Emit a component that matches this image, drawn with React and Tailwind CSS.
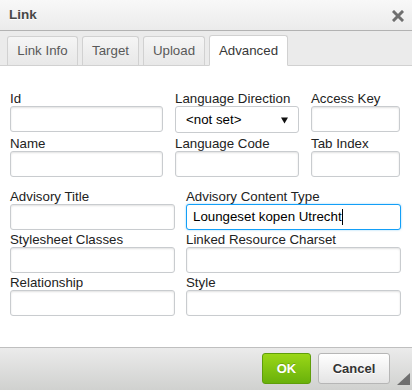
import React from "react";

const Label = ({ children }) => (
  <div className="h-[15px] leading-[15px] text-[13.3px] text-[#222] whitespace-nowrap">{children}</div>
);

const Input = ({ children, focused }) => (
  <div
    className={
      "h-[26px] rounded-[3px] bg-white border flex items-center pl-[6px] text-[13.3px] text-black " +
      (focused
        ? "border-[#139ff7] shadow-[0_0_2px_rgba(19,159,247,0.5)]"
        : "border-[#c9cccf] shadow-[inset_0_1px_2px_rgba(0,0,0,0.12)]")
    }
  >
    {children}
  </div>
);

const Field = ({ label, children, focused }) => (
  <div className="flex flex-col">
    <Label>{label}</Label>
    <Input focused={focused}>{children}</Input>
  </div>
);

const Tab = ({ children, active, w }) => (
  <div
    className={
      "border border-[#d1d1d1] rounded-t-[3px] text-[13.3px] flex items-center justify-center " +
      w +
      " " +
      (active
        ? "bg-white text-[#383838] border-b-white h-[31px] -mb-px"
        : "bg-gradient-to-b from-[#f5f5f5] to-[#e8e8e8] text-[#595959] h-[29px] border-b-0")
    }
  >
    {children}
  </div>
);

export default function App() {
  return (
    <div
      className="w-[412px] h-[390px] flex flex-col bg-white overflow-hidden"
      style={{ fontFamily: '"Liberation Sans", Arial, sans-serif' }}
    >
      {/* Title bar */}
      <div className="h-[31px] shrink-0 flex items-center justify-between pl-[9px] pr-[8px] bg-gradient-to-b from-[#f8f8f8] to-[#ebebeb] border-b border-[#b2b2b2]">
        <span className="text-[13.5px] font-bold text-[#474747] [text-shadow:0_1px_0_#fff]">Link</span>
        <svg width="12" height="12" viewBox="0 0 12 12" className="mt-[1px]">
          <path d="M2 2 L10 10 M10 2 L2 10" stroke="#6f6f6f" strokeWidth="3" strokeLinecap="square" />
        </svg>
      </div>

      {/* Tabs */}
      <div className="h-[35px] shrink-0 bg-[#ebebeb] border-b border-[#d1d1d1] flex items-end gap-[4px] pl-[7px]">
        <Tab w="w-[71px]">Link Info</Tab>
        <Tab w="w-[57px]">Target</Tab>
        <Tab w="w-[62px]">Upload</Tab>
        <Tab w="w-[79px]" active>Advanced</Tab>
      </div>

      {/* Content */}
      <div className="flex-1 bg-white pt-[25px] pl-[10px]">
        <div className="grid grid-cols-[153px_124px_89px] gap-x-[12px] gap-y-[4px]">
          <Field label="Id" />
          <div className="flex flex-col">
            <Label>Language Direction</Label>
            <div className="h-[27px] -mb-px rounded-[3px] bg-white border border-[#c9cccf] flex items-center justify-between pl-[10px] pr-[10px] text-[13.3px] text-black">
              <span>&lt;not set&gt;</span>
              <svg width="7" height="7" viewBox="0 0 7 7" className="mt-[1px]">
                <path d="M0 0.5 L7 0.5 L3.5 6.5 Z" fill="#111" />
              </svg>
            </div>
          </div>
          <Field label="Access Key" />
          <Field label="Name" />
          <Field label="Language Code" />
          <Field label="Tab Index" />
        </div>

        <div className="grid grid-cols-[165px_215px] gap-x-[11px] gap-y-[2px] mt-[12px]">
          <Field label="Advisory Title" />
          <Field label="Advisory Content Type" focused>
            <span>Loungeset kopen Utrecht</span>
            <span className="inline-block w-px h-[16px] bg-black" />
          </Field>
          <Field label="Stylesheet Classes" />
          <Field label="Linked Resource Charset" />
          <Field label="Relationship" />
          <Field label="Style" />
        </div>
      </div>

      {/* Footer */}
      <div className="h-[43px] shrink-0 relative border-t border-[#bfbfbf] bg-gradient-to-b from-[#ebebeb] to-[#d0d1cf] flex items-center justify-end pr-[22px] gap-[7px] pb-[1px]">
        <div className="w-[49px] h-[31px] rounded-[3px] border border-[#5f9e0a] bg-gradient-to-b from-[#9ad717] to-[#69b10b] flex items-center justify-center text-[13px] font-bold text-white [text-shadow:0_-1px_0_rgba(0,0,0,0.2)]">
          OK
        </div>
        <div className="w-[72px] h-[31px] rounded-[3px] border border-[#b6b6b6] bg-gradient-to-b from-white to-[#e4e4e4] flex items-center justify-center text-[13px] font-bold text-[#333] [text-shadow:0_1px_0_#fff]">
          Cancel
        </div>
        <svg width="13" height="12" viewBox="0 0 13 12" className="absolute right-[2px] bottom-[5px]">
          <path d="M13 0 L13 12 L0 12 Z" fill="#6f6f6f" />
        </svg>
      </div>
    </div>
  );
}
